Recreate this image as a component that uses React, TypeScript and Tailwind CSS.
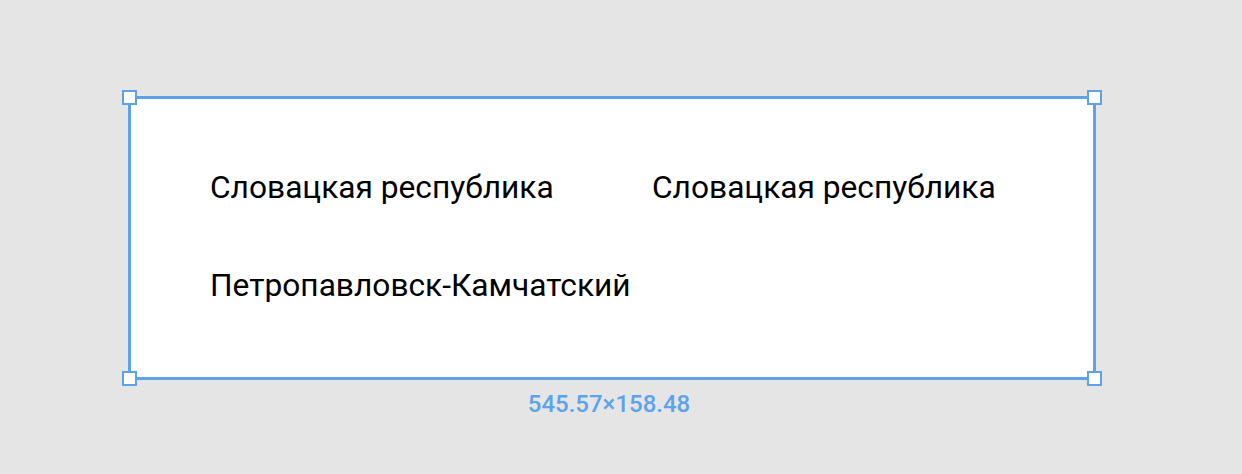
import React from "react";

const Handle = ({ className }: { className: string }) => (
  <div className={`absolute w-[15px] h-[15px] bg-white border-2 border-[#5ca2ec] ${className}`} />
);

export default function App() {
  return (
    <div className="w-[1242px] h-[474px] bg-[#e5e5e5] overflow-hidden" style={{ fontFamily: "Roboto, 'Noto Sans', sans-serif" }}>
      <div className="pt-[96px] pl-[128px]">
        <div className="relative w-[968px] h-[284px] bg-white border-[3px] border-[#5ca2ec]">
          <Handle className="-left-[9px] -top-[9px]" />
          <Handle className="-right-[9px] -top-[9px]" />
          <Handle className="-left-[9px] -bottom-[9px]" />
          <Handle className="-right-[9px] -bottom-[9px]" />
          <div className="grid grid-cols-[442px_1fr] gap-y-[60px] pl-[79px] pt-[70px] text-[31.7px] leading-[38px] text-black">
            <div>Словацкая республика</div>
            <div>Словацкая республика</div>
            <div className="whitespace-nowrap">Петропавловск-Камчатский</div>
            <div></div>
          </div>
        </div>
        <div className="w-[968px] flex justify-center pt-[10px]">
          <span className="text-[24px] leading-[28px] font-medium text-[#5ca2ec] pr-[6px]">545.57×158.48</span>
        </div>
      </div>
    </div>
  );
}
